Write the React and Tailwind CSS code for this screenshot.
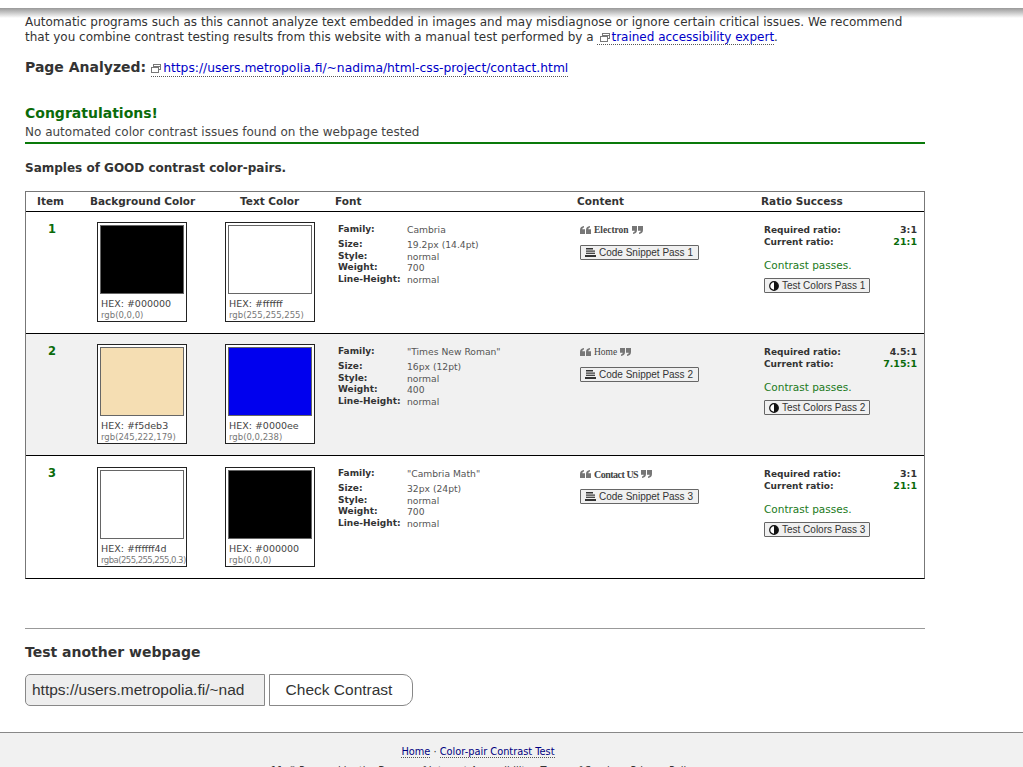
import React from "react";

const verdana = "font-['DejaVu_Sans',Verdana,sans-serif]";

function Quote({ open }) {
  return (
    <svg width="11" height="8" viewBox="0 0 11 9" preserveAspectRatio="none" className="inline-block shrink-0" fill="#777">
      {open ? (
        <path d="M0 9V4.500C0 2 1.200.6 4 0v1.600C2.800 2 2.300 2.700 2.300 3.700H5V9zM6 9V4.500C6 2 7.200.6 10 0v1.600C8.800 2 8.300 2.700 8.300 3.700H11V9z" />
      ) : (
        <path d="M5 0v4.500C5 7 3.800 8.400 1 9V7.400C2.200 7 2.700 6.300 2.700 5.300H0V0zM11 0v4.500C11 7 9.800 8.400 7 9V7.400C8.200 7 8.700 6.300 8.700 5.300H6V0z" />
      )}
    </svg>
  );
}

function ExternalIcon({ className = "mr-[2px]" }) {
  return (
    <svg width="10" height="9" viewBox="0 0 10 9" className={`inline-block align-[-1px] ${className}`} fill="none" stroke="#777" strokeWidth="1">
      <rect x="2.500" y="0.500" width="7" height="5" />
      <path d="M2.500 2.500H9.500" />
      <rect x="0.500" y="3.500" width="7" height="5" fill="#fff" />
    </svg>
  );
}

function ListIcon() {
  return (
    <svg width="11" height="9" viewBox="0 0 11 9" className="shrink-0" fill="#333">
      <rect x="1" y="0" width="7" height="1.500" />
      <rect x="1" y="2.500" width="9" height="1.200" />
      <rect x="1" y="4.700" width="9" height="1.200" />
      <rect x="0" y="7" width="11" height="2" />
    </svg>
  );
}

function ContrastIcon() {
  return (
    <svg width="10" height="10" viewBox="0 0 10 10" className="shrink-0">
      <circle cx="5" cy="5" r="4.300" fill="#fff" stroke="#111" strokeWidth="1.200" />
      <path d="M5 .7a4.300 4.300 0 0 1 0 8.600z" fill="#111" />
    </svg>
  );
}

function Swatch({ color, hex, rgb, rgbClass = "", offset }) {
  return (
    <div className={`w-[90px] h-[100px] border border-[#222] bg-white p-[2px] shrink-0 ${offset}`}>
      <div className="h-[69px] border border-[#666]" style={{ background: color }} />
      <div className={`${verdana} text-[9.500px] leading-[12px] text-[#444] pl-[1px] mt-[4px]`}>HEX: {hex}</div>
      <div className={`${verdana} text-[8.500px] leading-[11px] text-[#777] pl-[1px] whitespace-nowrap ${rgbClass}`}>{rgb}</div>
    </div>
  );
}

function FontRow({ label, value, className = "" }) {
  return (
    <div className={`flex leading-[11.750px] ${className}`}>
      <div className="w-[69px] font-bold text-[#333] shrink-0 whitespace-nowrap text-[9px]">{label}</div>
      <div className="text-[#555] whitespace-nowrap text-[9.200px]">{value}</div>
    </div>
  );
}

function Row({ item, bg, height, swatchOffset, bgSwatch, textSwatch, font, sample, sampleClass, required, current }) {
  return (
    <div className={`flex ${height} border-t border-black ${bg} ${verdana}`}>
      <div className="w-[71px] pl-[22px] pt-[10px] shrink-0 text-[11.500px] leading-[14px] font-bold text-[#0a6b0a]">{item}</div>
      <Swatch {...bgSwatch} offset={swatchOffset} />
      <div className="w-[38px] shrink-0" />
      <Swatch {...textSwatch} offset={swatchOffset} />
      <div className="w-[23px] shrink-0" />
      <div className="w-[242px] shrink-0 pt-[12px]">
        <FontRow label="Family:" value={font.family} className="mb-[3px]" />
        <FontRow label="Size:" value={font.size} />
        <FontRow label="Style:" value="normal" />
        <FontRow label="Weight:" value={font.weight} />
        <FontRow label="Line-Height:" value="normal" />
      </div>
      <div className="w-[184px] shrink-0 pt-[12px]">
        <div className="flex items-center gap-[3px] h-[12px]">
          <Quote open />
          <span className={`font-['Liberation_Serif',serif] text-[#444] whitespace-nowrap ${sampleClass}`}>{sample}</span>
          <Quote />
        </div>
        <button className="mt-[9px] flex items-center gap-[3px] h-[15px] w-[119px] pl-[4px] border border-[#666] rounded-[1px] bg-[#f0f0f0] font-['Liberation_Sans',Arial,sans-serif] text-[10px] text-[#333] whitespace-nowrap">
          <ListIcon />
          Code Snippet Pass {item}
        </button>
      </div>
      <div className="w-[153px] shrink-0 pt-[12px]">
        <div className="flex justify-between font-bold leading-[12px] text-[#333]">
          <span className="text-[9px]">Required ratio:</span>
          <span className="text-[9.500px]">{required}</span>
        </div>
        <div className="flex justify-between font-bold leading-[12px] text-[#333]">
          <span className="text-[9px]">Current ratio:</span>
          <span className="text-[9.500px] text-[#0a6b0a]">{current}</span>
        </div>
        <div className="mt-[10px] text-[10.500px] leading-[14px] text-[#217a21]">Contrast passes.</div>
        <button className="mt-[6px] flex items-center gap-[3px] h-[15px] w-[106px] pl-[4px] border border-[#666] rounded-[1px] bg-[#f0f0f0] font-['Liberation_Sans',Arial,sans-serif] text-[10px] text-[#333] whitespace-nowrap">
          <ContrastIcon />
          Test Colors Pass {item}
        </button>
      </div>
    </div>
  );
}

const rows = [
  {
    item: 1,
    bg: "bg-white",
    height: "h-[122px]",
    swatchOffset: "mt-[10px]",
    bgSwatch: { color: "#000000", hex: "#000000", rgb: "rgb(0,0,0)" },
    textSwatch: { color: "#ffffff", hex: "#ffffff", rgb: "rgb(255,255,255)" },
    font: { family: "Cambria", size: "19.2px (14.4pt)", weight: "700" },
    sample: "Electron",
    sampleClass: "font-bold text-[9.500px]",
    required: "3:1",
    current: "21:1",
  },
  {
    item: 2,
    bg: "bg-[#f1f1f1]",
    height: "h-[122px]",
    swatchOffset: "mt-[10px]",
    bgSwatch: { color: "#f5deb3", hex: "#f5deb3", rgb: "rgb(245,222,179)" },
    textSwatch: { color: "#0000ee", hex: "#0000ee", rgb: "rgb(0,0,238)" },
    font: { family: '"Times New Roman"', size: "16px (12pt)", weight: "400" },
    sample: "Home",
    sampleClass: "text-[9.500px]",
    required: "4.5:1",
    current: "7.15:1",
  },
  {
    item: 3,
    bg: "bg-white",
    height: "h-[123px]",
    swatchOffset: "mt-[11px]",
    bgSwatch: { color: "#ffffff", hex: "#ffffff4d", rgb: "rgba(255,255,255,0.3)", rgbClass: "tracking-[-0.55px]" },
    textSwatch: { color: "#000000", hex: "#000000", rgb: "rgb(0,0,0)" },
    font: { family: '"Cambria Math"', size: "32px (24pt)", weight: "700" },
    sample: "Contact US",
    sampleClass: "font-bold text-[10px] tracking-[-0.5px]",
    required: "3:1",
    current: "21:1",
  },
];

export default function App() {
  return (
    <div className={`h-[767px] w-[1023px] overflow-hidden bg-white flex flex-col ${verdana} text-[#333]`}>
      <div className="h-[8px] shrink-0 bg-white" />
      <div className="h-[10px] -mb-[3px] shrink-0 bg-gradient-to-b from-[#999999] to-white" />
      <main className="relative px-[25px] w-[950px] shrink-0">
        <p className="text-[12px] leading-[15px] text-[#333] whitespace-nowrap">
          Automatic programs such as this cannot analyze text embedded in images and may misdiagnose or ignore certain critical issues. We recommend
          <br />
          that you combine contrast testing results from this website with a manual test performed by a{" "}
          <a className="text-[#0000c8] border-b border-dotted border-[#555]">
            <ExternalIcon className="ml-[3px] mr-[1px]" />
            trained accessibility expert
          </a>
          .
        </p>
        <div className="mt-[13px] flex items-baseline whitespace-nowrap">
          <span className="text-[14px] font-bold leading-[18px] text-[#333]">Page Analyzed:</span>
          <a className="ml-[5px] text-[12.300px] leading-[16px] text-[#0000c8] border-b border-dotted border-[#555]">
            <ExternalIcon />
            https://users.metropolia.fi/~nadima/html-css-project/contact.html
          </a>
        </div>
        <h2 className="mt-[27px] text-[14px] font-bold leading-[18px] text-[#0a6b0a]">Congratulations!</h2>
        <p className="text-[12px] leading-[14px] mt-[3px] pb-[3px] border-b-2 border-[#0a7a0a] text-[#444]">
          No automated color contrast issues found on the webpage tested
        </p>
        <h3 className="mt-[16px] text-[12px] leading-[16px] font-bold text-[#333]">Samples of GOOD contrast color-pairs.</h3>
        <div className="mt-[15px] border border-[#777] border-b-black w-[900px]">
          <div className="flex h-[19px] items-center text-[10.500px] font-bold text-[#333] whitespace-nowrap">
            <div className="w-[64px] pl-[11px] shrink-0">Item</div>
            <div className="w-[150px] shrink-0">Background Color</div>
            <div className="w-[95px] shrink-0">Text Color</div>
            <div className="w-[242px] shrink-0">Font</div>
            <div className="w-[184px] shrink-0">Content</div>
            <div className="shrink-0">Ratio Success</div>
          </div>
          {rows.map((r) => (
            <Row key={r.item} {...r} />
          ))}
        </div>
        <hr className="mt-[49px] border-0 border-t border-[#999]" />
        <h3 className="mt-[14px] text-[14px] leading-[18px] font-bold text-[#333]">Test another webpage</h3>
        <div className="mt-[13px] flex gap-[4px] font-['Liberation_Sans',Arial,sans-serif] text-[15.500px] text-[#333]">
          <div className="w-[240px] h-[32px] flex items-center pl-[6px] border border-[#888] rounded-l-[5px] bg-[#eeeeee] whitespace-nowrap overflow-hidden">
            https://users.metropolia.fi/~nad
          </div>
          <button className="w-[144px] h-[32px] pr-[4px] border border-[#888] rounded-r-[10px] bg-white">Check Contrast</button>
        </div>
      </main>
      <footer className="mt-[26px] flex-1 border-t border-[#888] bg-[#f1f1f1] text-[9.800px] leading-[14px] text-[#333] pt-[12px] whitespace-nowrap">
        <div className="w-[956px] text-center">
          <div>
            <a className="text-[#000080] border-b border-dotted border-[#555]">Home</a> ·{" "}
            <a className="text-[#000080] border-b border-dotted border-[#555]">Color-pair Contrast Test</a>
          </div>
          <div className="mt-[5px] pl-[12px]">
            11y<sup className="text-[7px]">®</sup> Powered by the Bureau of Internet Accessibility · Terms of Service · Privacy Policy
          </div>
        </div>
      </footer>
    </div>
  );
}
